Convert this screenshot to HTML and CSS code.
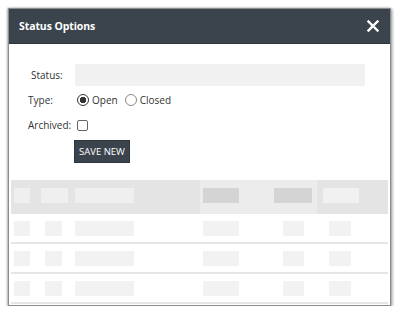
FILE: index.html
```html
<!DOCTYPE html>
<html lang="en">
<head>
  <meta charset="UTF-8" />
  <title>Status Options</title>
  <link rel="stylesheet" href="styles.css">
</head>
<body>

  <div class="dialog">
    <div class="dialog-header">
      <span class="dialog-title">Status Options</span>
      <svg class="close" width="12" height="12" viewBox="0 0 12 12">
        <path d="M1.5 1.5 L10.5 10.5 M10.5 1.5 L1.5 10.5" stroke="white" stroke-width="2.4" stroke-linecap="square" />
      </svg>
    </div>

    <div class="form">
      <div class="form-row">
        <label class="label status-label">Status:</label>
        <input class="text-input" type="text" />
      </div>
      <div class="form-row">
        <label class="label">Type:</label>
        <label class="option"><input type="radio" name="type" checked /> Open</label>
        <label class="option"><input type="radio" name="type" /> Closed</label>
      </div>
      <div class="form-row">
        <label class="label">Archived:</label>
        <input type="checkbox" />
      </div>
      <div class="form-row">
        <span class="label"></span>
        <button class="btn">SAVE NEW</button>
      </div>
    </div>

    <div class="grid">
      <div class="grid-row grid-head">
        <div class="cell c1"><span class="ph ph-light w16"></span></div>
        <div class="cell c2"><span class="ph ph-light w27"></span></div>
        <div class="cell c3"><span class="ph ph-light w59"></span></div>
        <div class="cell c4 sorted"><span class="ph ph-dark w36"></span></div>
        <div class="cell c5 sorted"><span class="ph ph-dark w38"></span></div>
        <div class="cell c6"><span class="ph ph-lighter w36"></span></div>
      </div>
      <div class="grid-row">
        <div class="cell c1"><span class="ph w16"></span></div>
        <div class="cell c2"><span class="ph w17 r2"></span></div>
        <div class="cell c3"><span class="ph w59"></span></div>
        <div class="cell c4"><span class="ph w36"></span></div>
        <div class="cell c5"><span class="ph w21 r5"></span></div>
        <div class="cell c6"><span class="ph w22 r6"></span></div>
      </div>
      <div class="grid-row">
        <div class="cell c1"><span class="ph w16"></span></div>
        <div class="cell c2"><span class="ph w17 r2"></span></div>
        <div class="cell c3"><span class="ph w59"></span></div>
        <div class="cell c4"><span class="ph w36"></span></div>
        <div class="cell c5"><span class="ph w21 r5"></span></div>
        <div class="cell c6"><span class="ph w22 r6"></span></div>
      </div>
      <div class="grid-row">
        <div class="cell c1"><span class="ph w16"></span></div>
        <div class="cell c2"><span class="ph w17 r2"></span></div>
        <div class="cell c3"><span class="ph w59"></span></div>
        <div class="cell c4"><span class="ph w36"></span></div>
        <div class="cell c5"><span class="ph w21 r5"></span></div>
        <div class="cell c6"><span class="ph w22 r6"></span></div>
      </div>
    </div>
  </div>

</body>
</html>
```

FILE: styles.css
```css
body {
  margin: 0;
  background: white;
  font-family: "Open Sans", "Noto Sans", sans-serif;
  color: #333;
}

.dialog {
  margin: 8px 0 0 8px;
  width: 381px;
  height: 296px;
  border: 1px solid #8c8c8c;
  box-shadow: 1px 1px 3px rgba(0,0,0,0.45), -1px 0 2px rgba(0,0,0,0.25);
  background: white;
  display: flex;
  flex-direction: column;
}

.dialog-header {
  background: #3b444d;
  height: 34px;
  display: flex;
  align-items: center;
  justify-content: space-between;
  padding: 0 11px 0 10px;
  border-bottom: 1px solid #2e353c;
}

.dialog-title {
  color: white;
  font-size: 10.5px;
  font-weight: bold;
  letter-spacing: -0.1px;
}

.form {
  padding: 20px 0 0 19px;
  display: flex;
  flex-direction: column;
}

.form-row {
  display: flex;
  align-items: center;
  font-size: 10px;
  min-height: 22px;
  margin-bottom: 3px;
}

.label {
  width: 47px;
  flex-shrink: 0;
}

.status-label {
  padding-left: 3px;
  width: 44px;
}

.text-input {
  width: 290px;
  height: 22px;
  box-sizing: border-box;
  border: none;
  background: #f1f1f1;
  margin: 0;
}

.option {
  display: flex;
  align-items: center;
  margin-right: 5px;
}

input[type="radio"] {
  appearance: none;
  width: 12px;
  height: 12px;
  margin: 0 3px 0 2px;
  border: 1px solid #555;
  border-radius: 50%;
  box-sizing: border-box;
  background: white;
}

input[type="radio"]:checked {
  border-color: #333;
  background: radial-gradient(circle, #333 0 3px, white 3.5px);
}

input[type="radio"]:not(:checked) {
  border-color: #888;
}

input[type="checkbox"] {
  appearance: none;
  width: 11px;
  height: 11px;
  margin: 0 0 0 2px;
  border: 1px solid #666;
  border-radius: 2px;
  box-sizing: border-box;
}

.btn {
  background: #3b444d;
  color: white;
  border: 1px solid #2e353c;
  font-family: "Open Sans", "Noto Sans", sans-serif;
  font-size: 9.5px;
  height: 23px;
  padding: 0 4px;
  margin: 1px 0 0 -1px;
}

.grid {
  margin: 14px 2px 0 2px;
}

.grid-row {
  display: flex;
  height: 28px;
  align-items: center;
  border-bottom: 2px solid #e6e6e6;
}

.grid-head {
  height: 34px;
  background: #e4e4e4;
  border-bottom: none;
}

.cell {
  height: 100%;
  display: flex;
  align-items: center;
}

.c1 { width: 26px; padding-left: 3px; box-sizing: border-box; }
.c2 { width: 35px; padding-left: 4px; box-sizing: border-box; }
.c3 { width: 128px; padding-left: 3px; box-sizing: border-box; }
.c4 { width: 60px; padding-left: 3px; box-sizing: border-box; }
.c5 { width: 57px; padding-left: 14px; box-sizing: border-box; }
.c6 { flex: 1; padding-left: 6px; box-sizing: border-box; }

.sorted {
  background: #ececec;
}

.grid-head .cell {
  align-items: flex-start;
  padding-top: 8px;
}

.ph {
  display: block;
  height: 15px;
  background: #f2f2f2;
}

.ph-light { background: #efefef; }
.ph-dark { background: #d4d4d4; }
.ph-lighter { background: #f1f1f1; }

.w16 { width: 16px; }
.w17 { width: 17px; }
.w21 { width: 21px; }
.w22 { width: 22px; }
.w27 { width: 27px; }
.w36 { width: 36px; }
.w38 { width: 38px; }
.w59 { width: 59px; }

.r2 { margin-left: 4px; }
.r5 { margin-left: 9px; }
.r6 { margin-left: 6px; }
```
